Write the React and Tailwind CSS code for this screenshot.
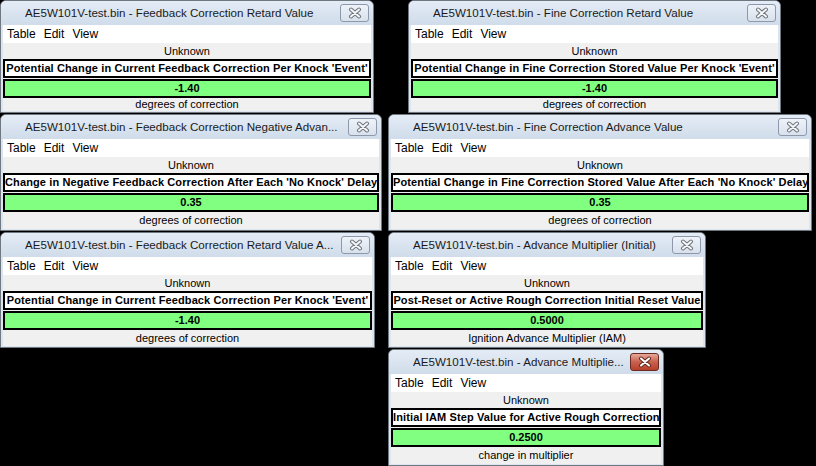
const windows = [
  {
    left: 0, top: 0, width: 374, height: 113,
    title: 'AE5W101V-test.bin - Feedback Correction Retard Value',
    label: "Potential Change in Current Feedback Correction Per Knock 'Event'",
    value: '-1.40', units: 'degrees of correction',
  },
  {
    left: 408, top: 0, width: 373, height: 113,
    title: 'AE5W101V-test.bin - Fine Correction Retard Value',
    label: "Potential Change in Fine Correction Stored Value Per Knock 'Event'",
    value: '-1.40', units: 'degrees of correction',
  },
  {
    left: 0, top: 114, width: 382, height: 117,
    title: 'AE5W101V-test.bin - Feedback Correction Negative Advan...',
    label: "Change in Negative Feedback Correction After Each 'No Knock' Delay",
    value: '0.35', units: 'degrees of correction',
  },
  {
    left: 388, top: 114, width: 424, height: 117,
    title: 'AE5W101V-test.bin - Fine Correction Advance Value',
    label: "Potential Change in Fine Correction Stored Value After Each 'No Knock' Delay",
    value: '0.35', units: 'degrees of correction',
  },
  {
    left: 0, top: 232, width: 375, height: 116,
    title: 'AE5W101V-test.bin - Feedback Correction Retard Value A...',
    label: "Potential Change in Current Feedback Correction Per Knock 'Event'",
    value: '-1.40', units: 'degrees of correction',
  },
  {
    left: 388, top: 232, width: 318, height: 116,
    title: 'AE5W101V-test.bin - Advance Multiplier (Initial)',
    label: 'Post-Reset or Active Rough Correction Initial Reset Value',
    value: '0.5000', units: 'Ignition Advance Multiplier (IAM)',
  },
  {
    left: 388, top: 349, width: 276, height: 117, active: true,
    title: 'AE5W101V-test.bin - Advance Multiplie...',
    label: 'Initial IAM Step Value for Active Rough Correction',
    value: '0.2500', units: 'change in multiplier',
  },
];

function CloseButton({ active }) {
  return (
    <div
      className={
        active
          ? 'w-[29px] h-[18px] shrink-0 rounded-[3px] border border-[#6b2b22] bg-gradient-to-b from-[#e5a89c] via-[#c8604d] to-[#b7402c] flex items-center justify-center'
          : 'w-[29px] h-[18px] shrink-0 rounded-[3px] border border-[#8d99ab] bg-gradient-to-b from-[#eef3f9] to-[#d8e1ec] flex items-center justify-center'
      }
    >
      <svg width="14" height="12" viewBox="0 0 14 12">
        <path
          d="M3 2.5 L11 9.5 M11 2.5 L3 9.5"
          stroke={active ? '#6a2a20' : '#6e747c'}
          strokeWidth="4"
          strokeLinecap="round"
        />
        <path
          d="M3 2.5 L11 9.5 M11 2.5 L3 9.5"
          stroke={active ? '#ffffff' : '#f6f7f9'}
          strokeWidth="2"
          strokeLinecap="round"
        />
      </svg>
    </div>
  );
}

function TableWindow({ left, top, width, height, title, label, value, units, active }) {
  return (
    <div
      className="absolute flex flex-col rounded-t-[6px] border border-[#6f7781] bg-[#dce4ee] overflow-hidden"
      style={{ left, top, width, height }}
    >
      {/* Title bar */}
      <div className="h-[24px] shrink-0 flex items-center bg-gradient-to-b from-[#e4ecf6] to-[#d0dcea] pl-[24px] pr-[4px]">
        <span className="flex-1 whitespace-nowrap overflow-hidden text-[11.6px] text-[#1a1a1a] font-['Liberation_Sans',sans-serif]">
          {title}
        </span>
        <CloseButton active={active} />
      </div>

      {/* Client area */}
      <div className="flex-1 flex flex-col mx-[2px] mb-[1px] bg-[#f0f0f0] overflow-hidden">
        <div className="h-[18px] shrink-0 bg-white flex items-center gap-[8px] pl-[4px] text-[12px] text-black font-['Liberation_Sans',sans-serif]">
          <span>Table</span>
          <span>Edit</span>
          <span>View</span>
        </div>
        <div className="h-[16px] shrink-0 flex items-center justify-center text-[11px] text-black font-['Liberation_Sans',sans-serif]">
          Unknown
        </div>
        <div className="h-[19px] shrink-0 border-2 border-black bg-white overflow-hidden whitespace-nowrap text-center leading-[15px] text-[11px] tracking-[0.12px] font-bold text-black font-['Liberation_Sans',sans-serif]">
          {label}
        </div>
        <div className="h-[19px] shrink-0 mt-[1px] border-2 border-black bg-[#80ff80] text-center leading-[15px] text-[11px] font-bold text-black font-['Liberation_Sans',sans-serif]">
          {value}
        </div>
        <div className="flex-1 flex items-center justify-center leading-[13px] text-[11px] text-black font-['Liberation_Sans',sans-serif]">
          {units}
        </div>
      </div>
    </div>
  );
}

export default function App() {
  return (
    <div className="relative w-[816px] h-[466px] bg-black overflow-hidden">
      {windows.map((w, i) => (
        <TableWindow key={i} {...w} />
      ))}
    </div>
  );
}
